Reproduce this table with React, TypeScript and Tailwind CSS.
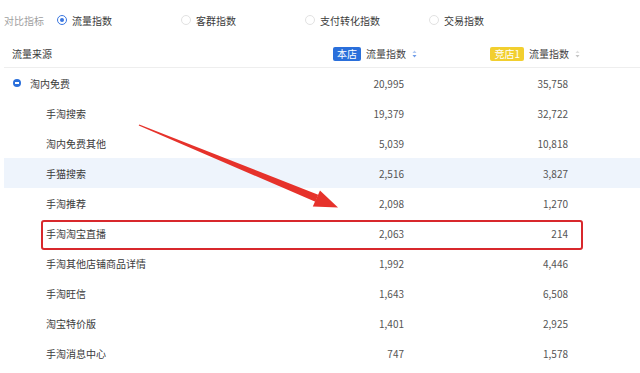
import React from "react";

const rows: { name: string; a: string; b: string; level: 0 | 1; hl?: boolean }[] = [
  { name: "淘内免费", a: "20,995", b: "35,758", level: 0 },
  { name: "手淘搜索", a: "19,379", b: "32,722", level: 1 },
  { name: "淘内免费其他", a: "5,039", b: "10,818", level: 1 },
  { name: "手猫搜索", a: "2,516", b: "3,827", level: 1, hl: true },
  { name: "手淘推荐", a: "2,098", b: "1,270", level: 1 },
  { name: "手淘淘宝直播", a: "2,063", b: "214", level: 1 },
  { name: "手淘其他店铺商品详情", a: "1,992", b: "4,446", level: 1 },
  { name: "手淘旺信", a: "1,643", b: "6,508", level: 1 },
  { name: "淘宝特价版", a: "1,401", b: "2,925", level: 1 },
  { name: "手淘消息中心", a: "747", b: "1,578", level: 1 },
];

const options = ["流量指数", "客群指数", "支付转化指数", "交易指数"];

function SortIcon({ color }: { color: string }) {
  return (
    <svg width="5" height="8" viewBox="0 0 5 8" className="ml-[6px]">
      <path d="M2.5 0.5 L4.5 3 L0.5 3 Z" fill={color} opacity="0.55" />
      <path d="M2.5 7.5 L4.5 5 L0.5 5 Z" fill={color} />
    </svg>
  );
}

export default function App() {
  return (
    <div
      className="relative w-[640px] h-[373px] overflow-hidden bg-white text-[10px] text-[#3a3a3a]"
      style={{ fontFamily: '"Noto Sans CJK SC", "Noto Sans", sans-serif' }}
    >
      {/* compare options */}
      <div className="flex items-center h-10 pl-1">
        <span className="w-[53px] text-[#a0a0a0]">对比指标</span>
        {options.map((o, i) => (
          <div key={o} className="flex items-center w-[124px]">
            {i === 0 ? (
              <span className="w-[10px] h-[10px] rounded-full border border-[#3a76e0] flex items-center justify-center">
                <span className="w-[4px] h-[4px] rounded-full bg-[#3a76e0]" />
              </span>
            ) : (
              <span className="w-[10px] h-[10px] rounded-full border border-[#e2e2e2]" />
            )}
            <span className="ml-[5px]">{o}</span>
          </div>
        ))}
      </div>

      <div className="ml-1">
        {/* header */}
        <div className="flex items-center h-[28px] border-b border-[#eeeeee]">
          <div className="w-[296px] pl-2">流量来源</div>
          <div className="w-[106px] flex items-center justify-end">
            <span className="h-[14px] px-[4px] leading-[14px] rounded-[2px] bg-[#2a6fdb] text-white">本店</span>
            <span className="ml-[5px] text-[#444]">流量指数</span>
            <span className="mr-[-11px]">
              <SortIcon color="#6f9ce8" />
            </span>
          </div>
          <div className="w-[163px] flex items-center justify-end">
            <span className="h-[14px] px-[4px] leading-[14px] rounded-[2px] bg-[#f2cf2f] text-white">竞店1</span>
            <span className="ml-[5px] text-[#444]">流量指数</span>
            <span className="mr-[-11px]">
              <SortIcon color="#c4c4c4" />
            </span>
          </div>
        </div>

        {/* rows */}
        {rows.map((r) => (
          <div
            key={r.name}
            className={`flex items-center h-[30px] ${r.hl ? "bg-[#eef4fc]" : ""}`}
          >
            <div className="w-[296px] flex items-center">
              {r.level === 0 ? (
                <>
                  <span className="ml-[9px] w-[8px] h-[8px] rounded-full bg-[#2a6fdb] flex items-center justify-center">
                    <span className="w-[4px] h-[1.5px] bg-white" />
                  </span>
                  <span className="ml-[9px]">{r.name}</span>
                </>
              ) : (
                <span className="ml-[42px]">{r.name}</span>
              )}
            </div>
            <div className="w-[104px] text-right text-[#555]">{r.a}</div>
            <div className="w-[164px] text-right text-[#555]">{r.b}</div>
          </div>
        ))}
      </div>

      {/* annotation: red box */}
      <div className="absolute left-[41px] top-[220px] w-[542px] h-[30px] border-2 border-[#d8282c] rounded-[3px]" />

      {/* annotation: arrow */}
      <svg className="absolute left-0 top-0" width="640" height="373" viewBox="0 0 640 373">
        <polygon
          points="138.7,125.6 139.3,124.4 318.2,194.8 315.4,201.8"
          fill="#e6322b"
        />
        <polygon points="320,190.5 338,207.5 312.8,206.5" fill="#e6322b" />
      </svg>
    </div>
  );
}
